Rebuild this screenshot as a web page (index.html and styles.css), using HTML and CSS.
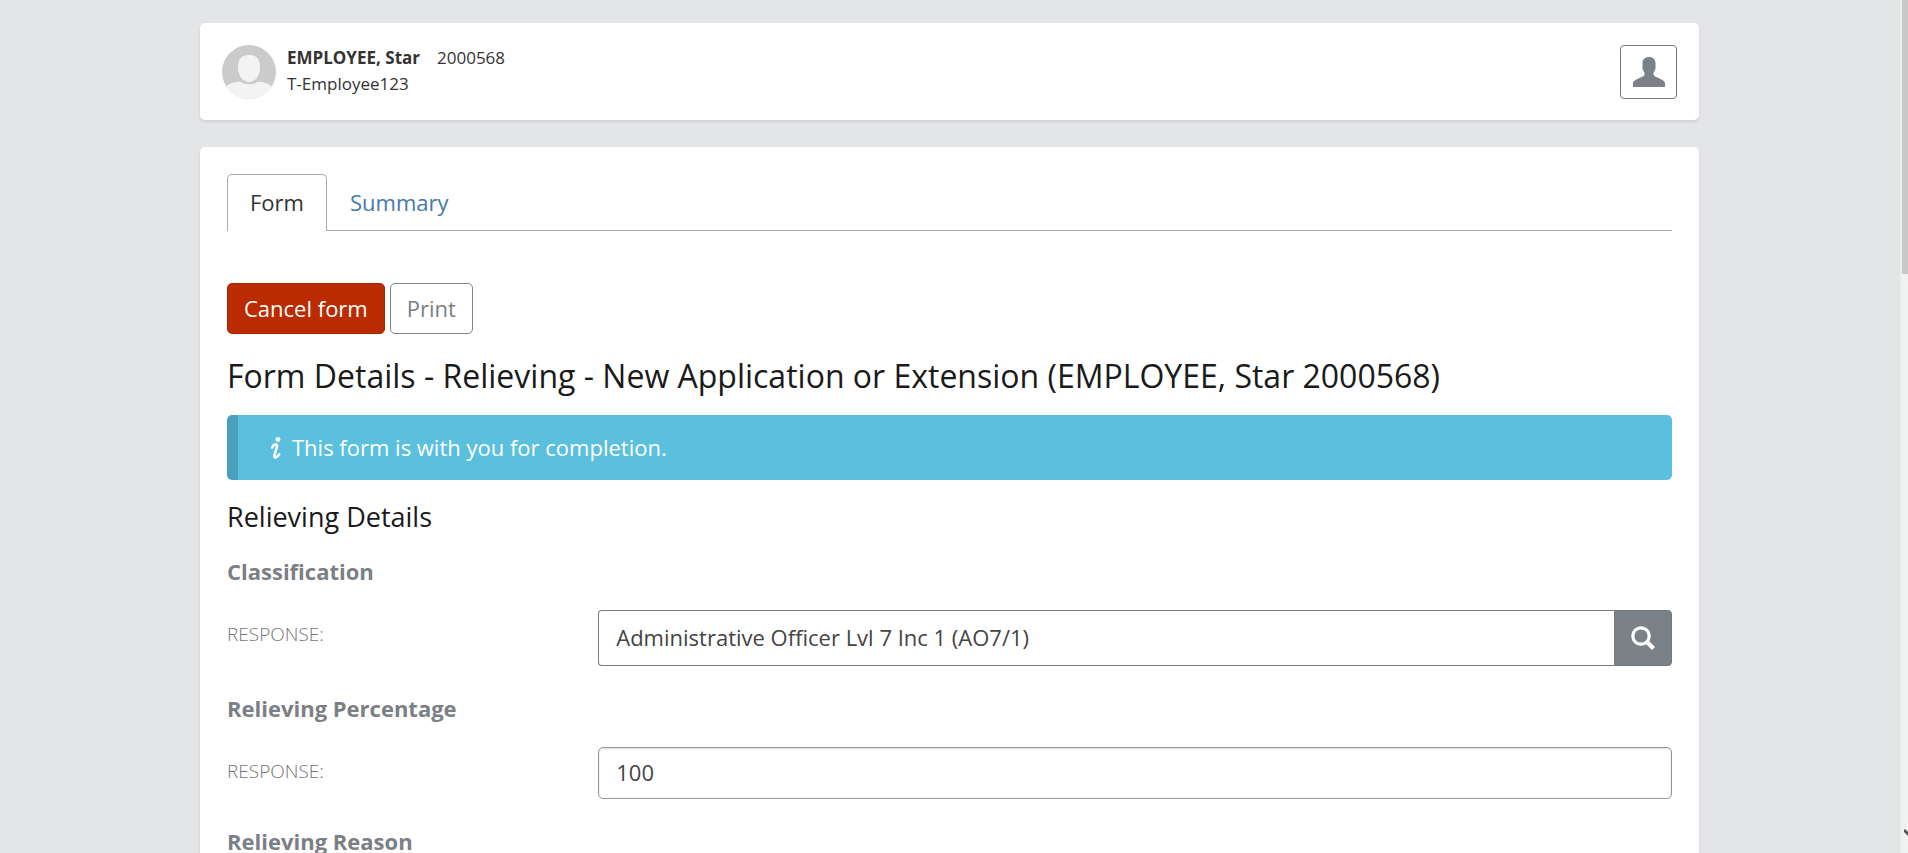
FILE: index.html
```html
<!DOCTYPE html>
<html lang="en">
<head>
<meta charset="utf-8">
<title>Form Details - Relieving</title>
<link rel="stylesheet" href="styles.css">
</head>
<body>
<div class="viewport">
  <main class="page">
    <header class="card profile">
      <svg class="avatar" viewBox="0 0 54 54" aria-hidden="true">
        <defs><clipPath id="disc"><circle cx="27" cy="27" r="27"/></clipPath></defs>
        <g clip-path="url(#disc)">
          <rect width="54" height="54" fill="#cbcbcb"/>
          <path fill="#f3f3f3" d="M16 22C16 13.500 20 10 27 10S38 13.500 38 22C38 30.500 33.500 37 27 37S16 30.500 16 22Z"/>
          <path fill="#f3f3f3" d="M0 54V46C5 39 13 36 19 37C22 40 32 40 35 37C41 36 49 39 54 46V54Z"/>
        </g>
      </svg>
      <div class="identity">
        <div class="name-line"><strong>EMPLOYEE, Star</strong><span>2000568</span></div>
        <div>T-Employee123</div>
      </div>
      <button class="profile-button" type="button" aria-label="Profile">
        <svg width="32" height="30" viewBox="0 0 32 30" aria-hidden="true"><path fill="#7b8287" d="M16 0C20 0 22.500 2.500 22.500 6V11C22.500 12.500 22 13 21.500 14C21 15 20.500 15.500 20.500 17C20.500 19 22 19.500 24 20.300L29.500 23C31 23.800 32 24.800 32 26.500V30H0V26.500C0 24.800 1 23.800 2.500 23L8 20.300C10 19.500 11.500 19 11.500 17C11.500 15.500 11 15 10.500 14C10 13 9.500 12.500 9.500 11V6C9.500 2.500 12 0 16 0Z"/></svg>
      </button>
    </header>

    <section class="card form-card">
      <nav class="tabs">
        <a class="tab tab-active" href="#form">Form</a>
        <a class="tab" href="#summary">Summary</a>
      </nav>
      <div class="actions">
        <button class="btn btn-danger" type="button">Cancel form</button>
        <button class="btn" type="button">Print</button>
      </div>
      <h1>Form Details - Relieving - New Application or Extension (EMPLOYEE, Star 2000568)</h1>
      <div class="alert" role="status">
        <svg width="10" height="22" viewBox="0 0 10 22" aria-hidden="true"><circle cx="7" cy="2.500" r="2.400" fill="#fff"/><path d="M1.200 10.500C2.200 8 4 7 5.200 7.500C6.800 8.200 5.900 10 5.400 11.500L3.600 17.500C3 19.500 3.500 20.800 5 20.300C6.500 19.800 7.500 18.800 8.200 17.300" fill="none" stroke="#fff" stroke-width="2.600" stroke-linecap="round"/></svg>
        <span>This form is with you for completion.</span>
      </div>
      <h2>Relieving Details</h2>

      <div class="question">
        <h3>Classification</h3>
        <div class="response">
          <label for="classification">RESPONSE:</label>
          <div class="lookup">
            <input id="classification" type="text" value="Administrative Officer Lvl 7 Inc 1 (AO7/1)">
            <button type="button" aria-label="Search">
              <svg width="24" height="24" viewBox="0 0 24 24" fill="none" stroke="#fff" aria-hidden="true"><circle cx="10" cy="10" r="8.200" stroke-width="3.200"/><path d="M15.500 15.500L22.500 22.500" stroke-width="4.200"/></svg>
            </button>
          </div>
        </div>
      </div>

      <div class="question">
        <h3>Relieving Percentage</h3>
        <div class="response">
          <label for="percentage">RESPONSE:</label>
          <input id="percentage" class="plain-input" type="text" value="100">
        </div>
      </div>

      <div class="question">
        <h3>Relieving Reason</h3>
      </div>
    </section>
  </main>
  <div class="scroll-track" aria-hidden="true">
    <div class="scroll-thumb"></div>
    <svg class="scroll-arrow" width="4" height="8" viewBox="0 0 4 8"><path d="M0 1L5 6" fill="none" stroke="#555" stroke-width="3"/></svg>
  </div>
</div>
</body>
</html>
```

FILE: styles.css
```css
* { box-sizing: border-box; }

body {
  margin: 0;
  background: #e4e5e7;
  color: #333;
  font-family: "Open Sans", "Noto Sans", sans-serif;
  font-size: 22px;
}

h1, h2, h3 { margin: 0; }

button, input { font: inherit; }

.viewport {
  display: flex;
  height: 100vh;
  overflow: hidden;
}

.page {
  flex: 1;
  display: flex;
  flex-direction: column;
  align-items: center;
  gap: 27px;
  padding: 23px 1px 0 0;
}

.card {
  width: 100%;
  max-width: 1499px;
  flex-shrink: 0;
  background: #fff;
  border-radius: 5px;
  box-shadow: 0 2px 3px rgba(0, 0, 0, 0.09);
}

.profile {
  display: flex;
  align-items: flex-start;
  gap: 11px;
  padding: 22px;
  padding-bottom: 21px;
}

.avatar { width: 54px; height: 54px; }

.identity {
  flex: 1;
  font-size: 17px;
  line-height: 26px;
}

.name-line { display: flex; gap: 17px; }

.profile-button {
  display: flex;
  align-items: center;
  justify-content: center;
  width: 57px;
  height: 54px;
  padding: 0;
  background: #fff;
  border: 1px solid #777b7e;
  border-radius: 4px;
}

.form-card { padding: 27px; }

.tabs {
  display: flex;
  border-bottom: 1px solid #aaa;
}

.tab {
  padding: 12px 22px 13px;
  border: 1px solid transparent;
  border-bottom: 0;
  color: #467aa8;
  line-height: 30px;
  text-decoration: none;
}

.tab-active {
  margin-bottom: -1px;
  background: #fff;
  border-color: #aaa;
  border-radius: 5px 5px 0 0;
  color: #333;
}

.actions {
  display: flex;
  gap: 5px;
  margin: 52px 0 22px;
}

.btn {
  padding: 9px 16px;
  background: #fff;
  border: 1px solid #808386;
  border-radius: 5px;
  color: #7b8085;
  line-height: 31px;
}

.btn-danger {
  background: #ba2b00;
  border-color: #a82600;
  color: #fff;
}

h1 {
  color: #1a1a1a;
  font-size: 32px;
  font-weight: 400;
  line-height: 40px;
}

.alert {
  display: flex;
  align-items: center;
  gap: 11px;
  margin: 19px 0;
  padding: 17px 33px;
  background: #5bbfde;
  border-left: 11px solid #49a0ba;
  border-radius: 5px;
  color: #fff;
  line-height: 31px;
}

h2 {
  margin-bottom: 21px;
  color: #1a1a1a;
  font-size: 27px;
  font-weight: 400;
  line-height: 36px;
}

.question { margin-bottom: 27px; }

h3 {
  margin-bottom: 24px;
  color: #7b8085;
  font-size: 22px;
  font-weight: 700;
  line-height: 30px;
}

.response {
  display: grid;
  grid-template-columns: 25% 1fr;
  column-gap: 10px;
}

.response label {
  padding-top: 10px;
  color: #757575;
  font-size: 19px;
  font-weight: 300;
  line-height: 28px;
}

.response input {
  min-width: 0;
  padding: 0 17px 2px;
  background: #fff;
  color: #444;
}

.lookup {
  display: flex;
  height: 56px;
}

.lookup input {
  flex: 1;
  border: 1px solid #777b7e;
  border-right: 0;
  border-radius: 4px 0 0 4px;
}

.lookup button {
  display: flex;
  align-items: center;
  justify-content: center;
  width: 58px;
  padding: 0;
  background: #7b8287;
  border: 1px solid #73787c;
  border-radius: 0 4px 4px 0;
}

.plain-input {
  height: 52px;
  border: 1px solid #979797;
  border-radius: 5px;
  box-shadow: inset 0 1px 2px rgba(0, 0, 0, 0.15);
}

.scroll-track {
  display: flex;
  flex-direction: column;
  align-items: flex-end;
  justify-content: space-between;
  width: 8px;
  padding-bottom: 16px;
  background: #f0f1f1;
  border-left: 1px solid #e9eaeb;
}

.scroll-thumb {
  width: 6px;
  height: 274px;
  background: #c8c8c8;
}
```
